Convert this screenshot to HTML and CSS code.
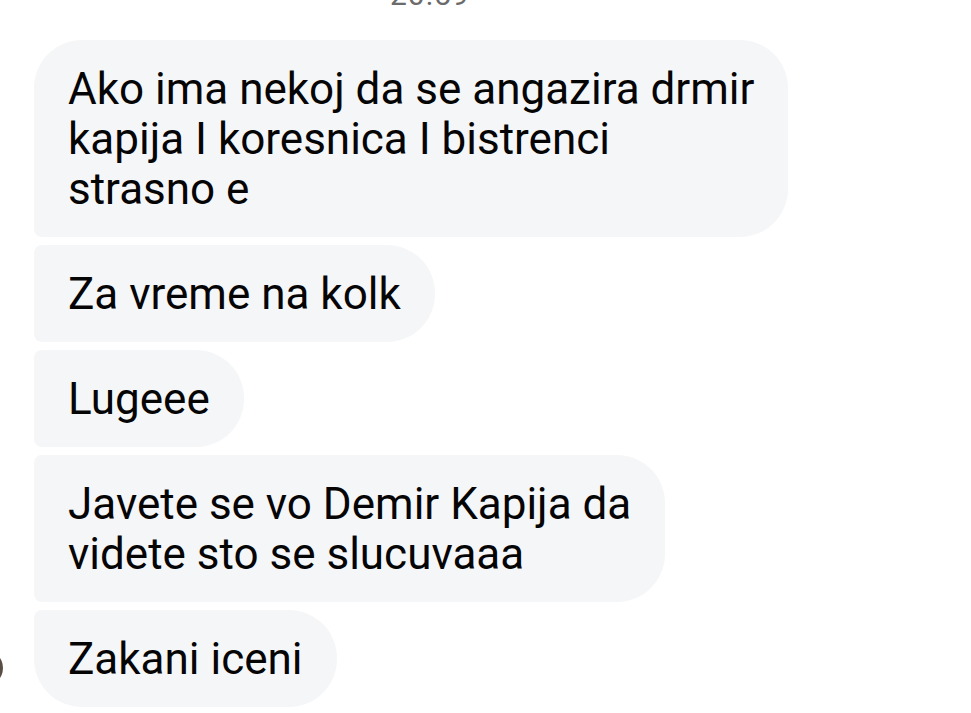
FILE: index.html
```html
<!DOCTYPE html>
<html>
<head>
<meta charset="utf-8">
<link rel="stylesheet" href="styles.css">
</head>
<body>
<div class="screen">
  <div class="time">20:59</div>
  <div class="avatar"></div>
  <div class="messages">
    <div class="bubble first">Ako ima nekoj da se angazira drmir<br>kapija I koresnica I bistrenci<br>strasno e</div>
    <div class="bubble">Za vreme na kolk</div>
    <div class="bubble">Lugeee</div>
    <div class="bubble">Javete se vo Demir Kapija da<br>videte sto se slucuvaaa</div>
    <div class="bubble last">Zakani iceni</div>
  </div>
</div>
</body>
</html>
```
FILE: styles.css
```css
html, body {
  margin: 0;
  padding: 0;
  background: #ffffff;
}
.screen {
  position: relative;
  width: 971px;
  height: 713px;
  overflow: hidden;
  font-family: Roboto, "Noto Sans", sans-serif;
}
.time {
  margin-top: -20px;
  height: 30px;
  padding-left: 390px;
  font-size: 30px;
  line-height: 30px;
  color: #6b6b6b;
  letter-spacing: 1px;
}
.avatar {
  position: absolute;
  left: -33px;
  top: 650px;
  width: 36px;
  height: 36px;
  border-radius: 50%;
  background: #5a4e44;
}
.messages {
  margin-top: 30px;
  padding-left: 34px;
  display: flex;
  flex-direction: column;
  align-items: flex-start;
  gap: 8px;
}
.bubble {
  background: #f5f6f8;
  color: #050505;
  font-size: 44px;
  line-height: 50px;
  padding: 24px 34px 23px 34px;
  white-space: nowrap;
  border-radius: 8px 48px 48px 8px;
}
.bubble.first {
  border-top-left-radius: 48px;
}
.bubble.last {
  border-bottom-left-radius: 48px;
}
```
